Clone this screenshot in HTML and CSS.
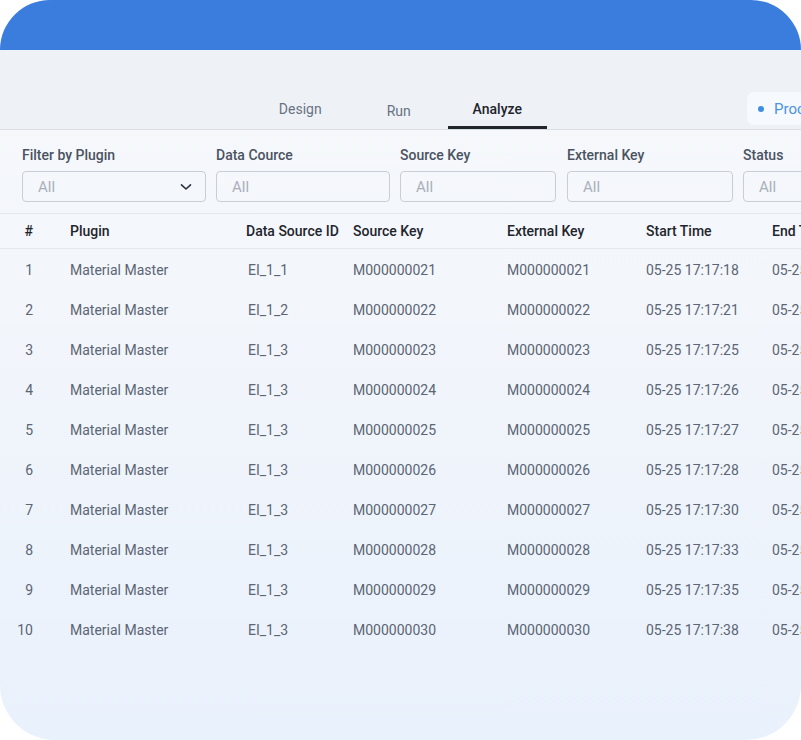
FILE: index.html
```html
<!DOCTYPE html>
<html>
<head>
<meta charset="utf-8">
<link rel="stylesheet" href="styles.css">
</head>
<body>
<div class="frame">
  <div class="topbar"></div>
  <div class="tabbar">
    <div class="tabs">
      <div class="tab">Design</div>
      <div class="tab tab-run">Run</div>
      <div class="tab active">Analyze</div>
    </div>
    <div class="chip"><span class="dot"></span><span class="chip-text">Process</span></div>
  </div>
  <div class="filters">
    <div class="field f1">
      <div class="label">Filter by Plugin</div>
      <div class="input select"><span>All</span>
        <svg class="chev" width="12" height="8" viewBox="0 0 12 8"><path d="M1.5 1.8 L6 6 L10.5 1.8" fill="none" stroke="#2b3340" stroke-width="1.6" stroke-linecap="round" stroke-linejoin="round"/></svg>
      </div>
    </div>
    <div class="field f2">
      <div class="label">Data Cource</div>
      <div class="input"><span>All</span></div>
    </div>
    <div class="field f3">
      <div class="label">Source Key</div>
      <div class="input"><span>All</span></div>
    </div>
    <div class="field f4">
      <div class="label">External Key</div>
      <div class="input"><span>All</span></div>
    </div>
    <div class="field f5">
      <div class="label">Status</div>
      <div class="input"><span>All</span></div>
    </div>
  </div>
  <div class="table">
    <div class="row head">
      <div class="c num">#</div><div class="c">Plugin</div><div class="c dsid">Data Source ID</div><div class="c">Source Key</div><div class="c">External Key</div><div class="c">Start Time</div><div class="c end">End Time</div>
    </div>
    <div class="row"><div class="c num">1</div><div class="c">Material Master</div><div class="c dsid">EI_1_1</div><div class="c">M000000021</div><div class="c">M000000021</div><div class="c">05-25 17:17:18</div><div class="c end">05-25 17:17:19</div></div>
    <div class="row"><div class="c num">2</div><div class="c">Material Master</div><div class="c dsid">EI_1_2</div><div class="c">M000000022</div><div class="c">M000000022</div><div class="c">05-25 17:17:21</div><div class="c end">05-25 17:17:22</div></div>
    <div class="row"><div class="c num">3</div><div class="c">Material Master</div><div class="c dsid">EI_1_3</div><div class="c">M000000023</div><div class="c">M000000023</div><div class="c">05-25 17:17:25</div><div class="c end">05-25 17:17:26</div></div>
    <div class="row"><div class="c num">4</div><div class="c">Material Master</div><div class="c dsid">EI_1_3</div><div class="c">M000000024</div><div class="c">M000000024</div><div class="c">05-25 17:17:26</div><div class="c end">05-25 17:17:27</div></div>
    <div class="row"><div class="c num">5</div><div class="c">Material Master</div><div class="c dsid">EI_1_3</div><div class="c">M000000025</div><div class="c">M000000025</div><div class="c">05-25 17:17:27</div><div class="c end">05-25 17:17:28</div></div>
    <div class="row"><div class="c num">6</div><div class="c">Material Master</div><div class="c dsid">EI_1_3</div><div class="c">M000000026</div><div class="c">M000000026</div><div class="c">05-25 17:17:28</div><div class="c end">05-25 17:17:29</div></div>
    <div class="row"><div class="c num">7</div><div class="c">Material Master</div><div class="c dsid">EI_1_3</div><div class="c">M000000027</div><div class="c">M000000027</div><div class="c">05-25 17:17:30</div><div class="c end">05-25 17:17:31</div></div>
    <div class="row"><div class="c num">8</div><div class="c">Material Master</div><div class="c dsid">EI_1_3</div><div class="c">M000000028</div><div class="c">M000000028</div><div class="c">05-25 17:17:33</div><div class="c end">05-25 17:17:34</div></div>
    <div class="row"><div class="c num">9</div><div class="c">Material Master</div><div class="c dsid">EI_1_3</div><div class="c">M000000029</div><div class="c">M000000029</div><div class="c">05-25 17:17:35</div><div class="c end">05-25 17:17:36</div></div>
    <div class="row"><div class="c num">10</div><div class="c">Material Master</div><div class="c dsid">EI_1_3</div><div class="c">M000000030</div><div class="c">M000000030</div><div class="c">05-25 17:17:38</div><div class="c end">05-25 17:17:39</div></div>
  </div>
</div>
</body>
</html>
```

FILE: styles.css
```css
html, body {
  margin: 0;
  padding: 0;
  background: #ffffff;
}
body {
  font-family: Roboto, "Liberation Sans", sans-serif;
}
.frame {
  width: 801px;
  height: 740px;
  border-radius: 50px 50px 55px 55px;
  overflow: hidden;
  background: linear-gradient(180deg, #f7f9fc 0%, #f3f6fb 40%, #e9f1fc 100%);
  display: flex;
  flex-direction: column;
}
.topbar {
  height: 50px;
  background: #3b7ddd;
  flex: none;
}
.tabbar {
  height: 79px;
  background: #eef2f7;
  border-bottom: 1px solid #d9dee5;
  display: flex;
  align-items: flex-end;
  flex: none;
}
.tabs {
  display: flex;
  margin-left: 251px;
}
.tab {
  width: 98.5px;
  text-align: center;
  font-size: 14px;
  color: #687282;
  padding-bottom: 8px;
  line-height: 18px;
  border-bottom: 3px solid transparent;
}
.tab-run {
  padding-top: 2px;
  padding-bottom: 6px;
}
.tab.active {
  color: #1e242c;
  font-weight: 500;
  border-bottom-color: #22272e;
}
.chip {
  margin-left: auto;
  align-self: flex-start;
  margin-top: 42px;
  height: 33px;
  width: 54px;
  background: #f6f9fd;
  border-radius: 7px 0 0 7px;
  display: flex;
  align-items: center;
  padding-left: 11px;
  box-sizing: border-box;
  overflow: hidden;
  white-space: nowrap;
}
.dot {
  width: 6px;
  height: 6px;
  border-radius: 50%;
  background: #3d8ee2;
  flex: none;
}
.chip-text {
  margin-left: 10px;
  font-size: 15px;
  color: #4a93e2;
}
.filters {
  display: flex;
  gap: 10px;
  padding: 16px 0 0 22px;
  height: 84px;
  box-sizing: border-box;
  border-bottom: 1px solid #e4e8ee;
  flex: none;
  overflow: hidden;
}
.field {
  display: flex;
  flex-direction: column;
  flex: none;
}
.f1 { width: 184px; }
.f2 { width: 174px; }
.f3 { width: 156px; }
.f4 { width: 166px; }
.f5 { width: 120px; }
.f4 { margin-left: 1px; }
.label {
  font-size: 14px;
  font-weight: 500;
  color: #4a5361;
  line-height: 18px;
  height: 18px;
}
.input {
  margin-top: 7px;
  height: 31px;
  border: 1px solid #c9ced6;
  border-radius: 4px;
  box-sizing: border-box;
  display: flex;
  align-items: center;
  padding-left: 15px;
  padding-right: 13px;
  font-size: 15px;
  color: #a9b0bb;
  background: transparent;
}
.select {
  justify-content: space-between;
}
.table {
  flex: 1;
}
.row {
  display: grid;
  grid-template-columns: 70px 177px 106px 154px 139px 126px 1fr;
  height: 40px;
  align-items: center;
  font-size: 14px;
  color: #5b6574;
  white-space: nowrap;
  padding-top: 1px;
  box-sizing: border-box;
}
.row.head {
  height: 35px;
  padding-top: 0;
  border-bottom: 1px solid #e4e8ee;
  color: #1f252d;
  font-weight: 500;
  font-size: 14px;
}
.num {
  text-align: right;
  padding-right: 37px;
}
.row .dsid { padding-left: 1px; }
.row.head .dsid { padding-left: 0; margin-left: -1px; }
```
